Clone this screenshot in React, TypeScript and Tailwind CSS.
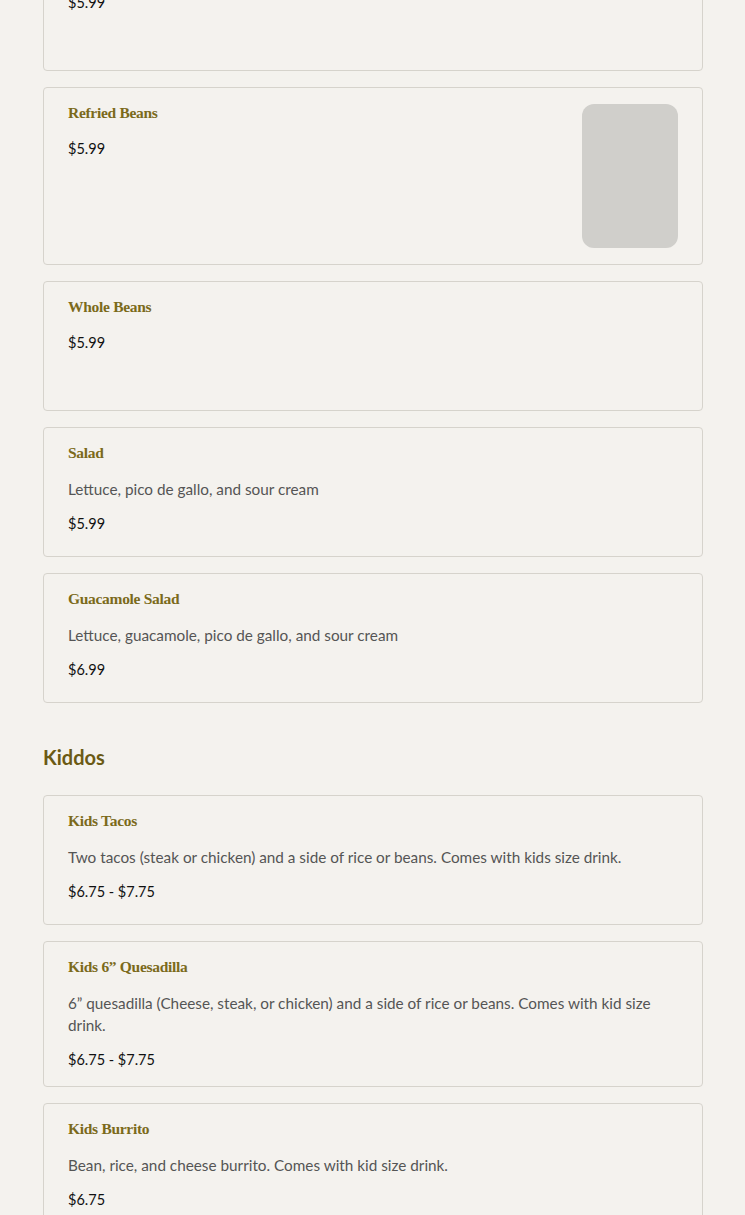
import React from "react";

type Item = {
  name: string;
  description?: string;
  price: string;
  image?: boolean;
};

const sides: Item[] = [
  { name: "Mexican Rice", price: "$5.99" },
  { name: "Refried Beans", price: "$5.99", image: true },
  { name: "Whole Beans", price: "$5.99" },
  { name: "Salad", description: "Lettuce, pico de gallo, and sour cream", price: "$5.99" },
  {
    name: "Guacamole Salad",
    description: "Lettuce, guacamole, pico de gallo, and sour cream",
    price: "$6.99",
  },
];

const kiddos: Item[] = [
  {
    name: "Kids Tacos",
    description: "Two tacos (steak or chicken) and a side of rice or beans. Comes with kids size drink.",
    price: "$6.75 - $7.75",
  },
  {
    name: "Kids 6\u201D Quesadilla",
    description:
      "6\u201D quesadilla (Cheese, steak, or chicken) and a side of rice or beans. Comes with kid size drink.",
    price: "$6.75 - $7.75",
  },
  {
    name: "Kids Burrito",
    description: "Bean, rice, and cheese burrito. Comes with kid size drink.",
    price: "$6.75",
  },
];

const titleFont = { fontFamily: '"Liberation Serif", serif' };

function MenuCard({ item }: { item: Item }) {
  return (
    <div className="flex min-h-[130px] gap-6 rounded border border-[#d6d3cc] bg-[#f4f2ee] py-4 pl-6 pr-6">
      <div className="flex-1">
        <h3
          className="text-[15.5px] leading-[18px] font-bold tracking-[-0.3px] text-[#7b6a1b]"
          style={titleFont}
        >
          {item.name}
        </h3>
        {item.description && (
          <p className="mt-4 text-[15.3px] leading-[22px] text-[#555]">{item.description}</p>
        )}
        <p
          className={`${item.description ? "mt-[14px]" : "mt-[17px]"} text-[14.5px] leading-[20px] text-[#111]`}
        >
          {item.price}
        </p>
      </div>
      {item.image && <div className="h-[144px] w-[96px] shrink-0 rounded-xl bg-[#d0cfcb]" />}
    </div>
  );
}

export default function App() {
  return (
    <div
      className="min-h-screen overflow-hidden bg-[#f4f2ee]"
      style={{ fontFamily: 'Lato, "Open Sans", sans-serif' }}
    >
      <div className="ml-[43px] w-[660px] -mt-[59px] pb-10">
        <div className="flex flex-col gap-4">
          {sides.map((item) => (
            <MenuCard key={item.name} item={item} />
          ))}
        </div>

        <h2 className="mt-10 text-[20px] leading-[28px] font-bold text-[#6b5a14]">Kiddos</h2>

        <div className="mt-6 flex flex-col gap-4">
          {kiddos.map((item) => (
            <MenuCard key={item.name} item={item} />
          ))}
        </div>
      </div>
    </div>
  );
}
